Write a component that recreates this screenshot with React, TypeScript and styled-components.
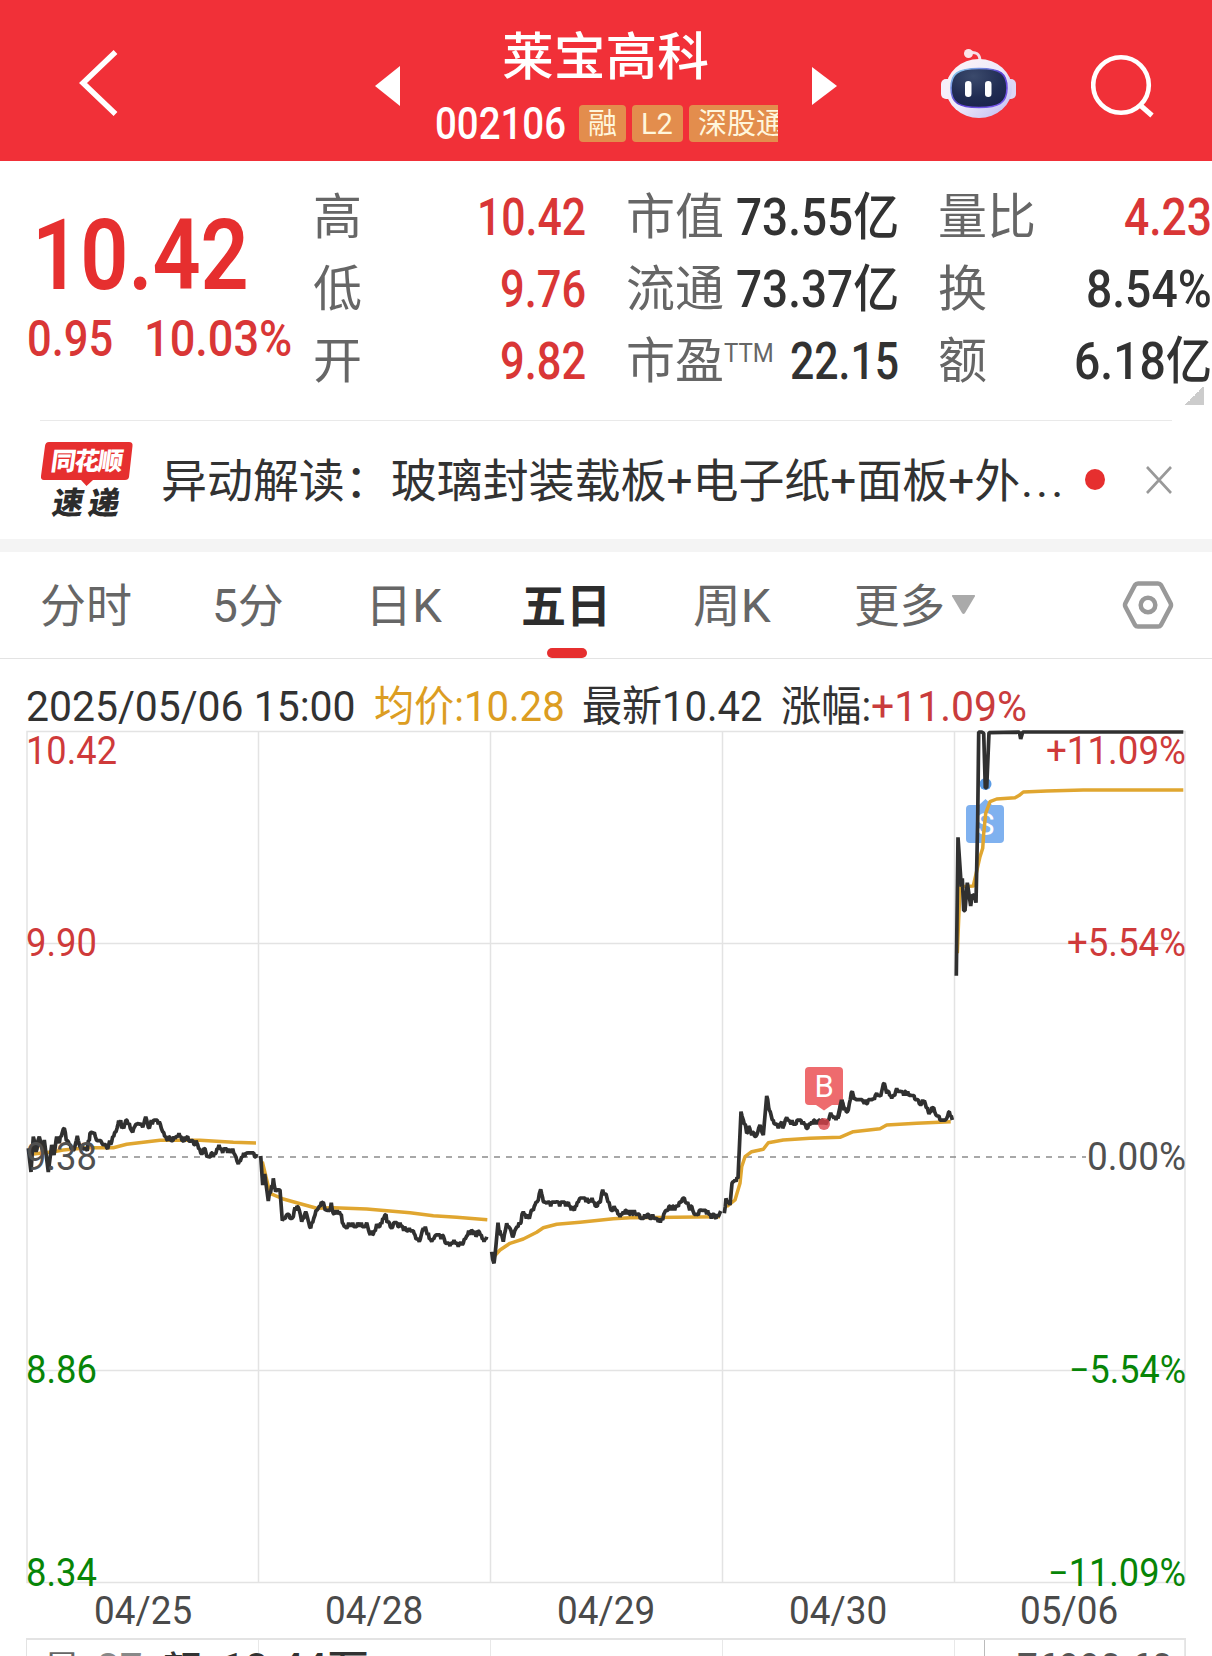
import React, { useLayoutEffect, useRef, useState } from "react";
import styled, { createGlobalStyle } from "styled-components";

const GlobalStyle = createGlobalStyle`
  * { box-sizing: border-box; }
  body { margin: 0; background: #fff; }
`;

const RED = "#e62f2f";
const VALUE_RED = "#d93636";
const INK = "#323232";
const GREY = "#666";
const font = `Roboto, "Noto Sans CJK SC", sans-serif`;

const Screen = styled.main`
  width: 1212px;
  height: 1656px;
  overflow: hidden;
  display: flex;
  flex-direction: column;
  background: #fff;
  color: ${INK};
  font-family: ${font};
`;

/* Text condensed or widened to a given measure */
const FitBox = styled.span<{ $w: number }>`
  display: block;
  flex: none;
  width: ${(p) => p.$w}px;
  white-space: pre;
`;
const FitInner = styled.span`
  display: inline-block;
  transform-origin: 0 50%;
`;
function Fit({ w, children }: { w: number; children: React.ReactNode }) {
  const ref = useRef<HTMLSpanElement>(null);
  const [scale, setScale] = useState(1);
  useLayoutEffect(() => {
    if (ref.current) setScale(w / ref.current.offsetWidth);
  }, [w]);
  return (
    <FitBox $w={w}>
      <FitInner ref={ref} style={{ transform: `scaleX(${scale})` }}>
        {children}
      </FitInner>
    </FitBox>
  );
}

/* ---------- header ---------- */
const Header = styled.header`
  flex: none;
  height: 161px;
  background: #f13038;
  color: #fff;
  display: grid;
  grid-template-columns: 375px 60px 343px 163px 150px 1fr;
`;
const HeaderCell = styled.div<{ $top: number; $left?: number }>`
  padding: ${(p) => p.$top}px 0 0 ${(p) => p.$left ?? 0}px;
  svg { display: block; }
`;
const TitleColumn = styled.div`
  padding-top: 23px;
  display: flex;
  flex-direction: column;
  overflow: hidden;
`;
const StockName = styled.h1`
  margin: 0 0 12px 67px;
  height: 70px;
  line-height: 70px;
  font-size: 51px;
  font-weight: 500;
`;
const CodeRow = styled.div`
  display: flex;
  height: 37px;
  gap: 6px;
`;
const Code = styled.div`
  flex: none;
  width: 138px;
  font-size: 44px;
  line-height: 39px;
  font-weight: 500;
`;
const Tag = styled.span<{ $w: number }>`
  flex: none;
  width: ${(p) => p.$w}px;
  padding-left: 9px;
  border-radius: 4px;
  background: #e38d4d;
  color: #fff6dc;
  font-size: 29px;
  line-height: 39px;
  white-space: nowrap;
`;

/* ---------- quote ---------- */
const Quote = styled.section`
  flex: none;
  height: 259px;
  padding-top: 19px;
  display: grid;
  grid-template-columns: 316px 270px 270px 271px;
  position: relative;
`;
const PriceColumn = styled.div`
  padding: 39px 0 0 27px;
  color: ${RED};
`;
const Price = styled.div`
  padding-left: 5px;
  height: 70px;
  line-height: 74px;
  font-size: 98px;
  font-weight: 600;
`;
const Change = styled.div`
  margin-top: 24px;
  height: 50px;
  line-height: 52px;
  display: flex;
  gap: 31px;
  color: ${VALUE_RED};
  font-size: 50px;
  font-weight: 500;
`;
const Stats = styled.dl<{ $shift: number }>`
  margin: 0 -${(p) => p.$shift}px 0 ${(p) => p.$shift}px;
`;
const Stat = styled.div`
  height: 72px;
  line-height: 76px;
  display: flex;
  justify-content: space-between;
`;
const StatLabel = styled.dt`
  display: flex;
  color: ${GREY};
  font-size: 49px;
  margin-left: -3px;
`;
const Superscript = styled.sup`
  font-size: 25px;
  line-height: 60px;
  vertical-align: top;
`;
const StatValue = styled.dd<{ $red?: boolean }>`
  margin: 0;
  color: ${(p) => (p.$red ? VALUE_RED : INK)};
  font-size: 51px;
  line-height: 76px;
  font-weight: 500;
`;
const ExpandCorner = styled.i`
  position: absolute;
  right: 8px;
  bottom: 15px;
  width: 19px;
  height: 19px;
  background: linear-gradient(135deg, transparent 50%, #ccc 50%);
`;

/* ---------- news ---------- */
const News = styled.section`
  flex: none;
  height: 119px;
  margin: 0 40px;
  border-top: 1px solid #e9e9e9;
  display: flex;
`;
const NewsLogo = styled.div`
  width: 121px;
  padding-top: 21px;
  svg { display: block; }
`;
const NewsText = styled.p`
  margin: 0;
  width: 925px;
  display: flex;
  font-size: 46px;
  line-height: 121px;
`;
const Ellipsis = styled.span`
  margin-left: 1px;
  letter-spacing: 3px;
`;
const Dot = styled.i`
  width: 20px;
  height: 21px;
  margin-top: 48px;
  border-radius: 50%;
  background: ${RED};
`;
const Close = styled.div`
  margin: 45px 0 0 39px;
`;
const Band = styled.div`
  flex: none;
  height: 13px;
  background: #f4f4f4;
`;

/* ---------- tabs ---------- */
const Tabs = styled.nav`
  flex: none;
  height: 107px;
  padding-left: 40px;
  border-bottom: 1px solid #e3e3e3;
  display: grid;
  grid-template-columns: 172px 153px 156px 172px 161px 268px 1fr;
`;
const Tab = styled.div<{ $active?: boolean }>`
  display: flex;
  flex-direction: column;
  height: 106px;
  color: ${(p) => (p.$active ? "#2d2d2d" : GREY)};
  font-weight: ${(p) => (p.$active ? 700 : 400)};
  font-size: 46px;
  line-height: 109px;
`;
const Underline = styled.i`
  width: 40px;
  height: 11px;
  margin: -13px 0 0 26px;
  border-radius: 6px;
  background: ${RED};
`;
const MoreTab = styled.div`
  display: flex;
  color: ${GREY};
  font-size: 46px;
  line-height: 109px;
  svg { margin: 43px 0 0 7px; }
`;
const Settings = styled.div`
  padding-top: 29px;
`;

/* ---------- chart ---------- */
const Legend = styled.div`
  flex: none;
  height: 72px;
  padding: 13px 0 0 26px;
  display: flex;
  font-size: 42px;
  line-height: 70px;
`;
const LegendItem = styled.div<{ $color?: string; $gap?: number }>`
  color: ${(p) => p.$color ?? INK};
  margin-right: ${(p) => p.$gap ?? 0}px;
`;
const Plot = styled.svg`
  flex: none;
  display: block;
  overflow: visible;
`;
const AxisText = styled.text`
  font-family: ${font};
  font-size: 38px;
`;
const MarkText = styled.text`
  font-family: ${font};
  font-size: 31px;
  fill: #fff;
`;
const Dates = styled.div`
  flex: none;
  height: 55px;
  margin: 0 27px;
  display: grid;
  grid-template-columns: repeat(5, 1fr);
  justify-items: center;
  color: #4a4a4a;
  font-size: 38px;
  line-height: 56px;
`;
const Volume = styled.section`
  position: relative;
  flex: none;
  height: 60px;
  margin: 0 26px;
  border: 1px solid #e3e3e3;
  border-top-width: 2px;
  display: grid;
  grid-template-columns: repeat(4, 232px) 1fr;
`;
const VolumeCell = styled.div`
  border-right: 1px solid #e8e8e8;
  &:last-child { border: 0; }
`;
const VolumeText = styled.div`
  position: absolute;
  inset: 5px 12px auto 16px;
  display: flex;
  font-size: 38px;
  line-height: 50px;
`;
const VolumeItem = styled.span<{ $color?: string; $gap?: number; $lift?: number; $weight?: number; $end?: boolean }>`
  color: ${(p) => p.$color ?? INK};
  font-weight: ${(p) => p.$weight ?? 400};
  margin: -${(p) => p.$lift ?? 0}px ${(p) => p.$gap ?? 0}px 0 ${(p) => (p.$end ? "auto" : "0")};
`;
const VolumeMark = styled.i`
  position: absolute;
  left: 957px;
  top: 0;
  width: 1px;
  height: 60px;
  background: #bbb;
`;

type Pt = [number, number];
interface Session { ox: number; oy: number; price: Pt[]; avg: Pt[]; }

const sessions: Session[] = [
  {
    ox: 0, oy: 1080,
    price: [[85,205],[93,276],[100,170],[108,215],[118,170],[128,215],[133,180],[145,276],[155,195],[162,225],[170,170],[178,190],[190,147],[205,185],[220,212],[232,168],[240,200],[262,212],[270,160],[280,160],[290,182],[305,188],[320,203],[335,185],[348,155],[356,122],[368,140],[378,120],[388,130],[395,152],[405,138],[415,130],[428,142],[437,110],[445,142],[460,122],[478,125],[488,155],[500,178],[510,172],[525,176],[537,160],[552,185],[560,172],[570,185],[590,188],[605,222],[612,205],[625,228],[645,222],[657,195],[665,208],[692,208],[705,225],[715,252],[725,230],[740,220],[770,222]],
    avg: [[100,222],[160,215],[190,210],[260,203],[340,203],[380,193],[430,187],[480,181],[600,181],[700,187],[768,189]],
  },
  {
    ox: 250, oy: 1120,
    price: [[32,108],[38,195],[44,162],[55,243],[62,215],[70,175],[77,215],[90,210],[97,302],[108,288],[130,290],[135,262],[145,262],[155,305],[167,275],[182,325],[195,285],[205,265],[217,248],[228,270],[240,272],[244,248],[250,280],[268,275],[280,312],[290,325],[302,312],[325,318],[350,308],[358,338],[370,342],[380,312],[395,312],[405,285],[415,305],[425,325],[438,308],[455,318],[468,330],[478,325],[492,340],[508,365],[520,325],[535,338],[545,365],[555,348],[580,348],[590,370],[600,378],[612,360],[625,380],[637,375],[650,348],[668,332],[678,350],[688,335],[702,365],[710,350]],
    avg: [[37,125],[60,220],[100,237],[140,248],[200,265],[250,263],[350,267],[480,278],[550,287],[620,292],[712,299]],
  },
  {
    ox: 480, oy: 1150,
    price: [[35,305],[42,340],[48,285],[54,218],[62,255],[70,275],[80,220],[90,235],[98,262],[108,235],[120,222],[130,185],[145,200],[157,180],[165,165],[175,150],[182,118],[190,155],[200,160],[230,155],[262,162],[280,177],[297,150],[330,148],[340,157],[358,157],[365,130],[378,132],[390,170],[405,175],[420,200],[430,185],[475,192],[485,205],[500,195],[525,205],[535,215],[548,210],[555,185],[575,172],[595,170],[607,147],[620,160],[640,185],[655,195],[662,180],[685,190],[705,202],[715,200],[722,183]],
    avg: [[42,320],[60,300],[90,280],[130,267],[170,247],[190,233],[230,223],[300,217],[400,206],[450,203],[720,200]],
  },
  {
    ox: 710, oy: 1050,
    price: [[43,490],[48,445],[60,465],[66,400],[75,390],[84,385],[93,185],[100,210],[110,250],[116,228],[125,255],[140,255],[150,225],[160,255],[170,138],[178,180],[192,220],[205,235],[215,215],[220,230],[230,202],[240,215],[280,215],[293,235],[305,215],[350,218],[362,188],[372,205],[383,205],[395,150],[403,180],[415,180],[424,128],[435,145],[460,155],[490,145],[500,130],[512,138],[520,102],[530,130],[545,145],[560,115],[575,125],[600,135],[625,150],[632,165],[643,152],[657,192],[665,172],[678,195],[700,210],[710,205],[718,185],[727,210]],
    avg: [[50,470],[75,450],[90,400],[95,350],[105,320],[125,305],[160,298],[175,278],[220,270],[300,265],[390,262],[430,245],[510,236],[530,225],[620,220],[722,215]],
  },
  {
    ox: 930, oy: 720,
    price: [[79,767],[84,352],[94,500],[97,475],[101,572],[105,572],[112,488],[122,558],[130,525],[138,548],[143,300],[146,36],[155,36],[161,40],[166,203],[170,203],[177,38],[268,36],[272,57],[278,36],[760,36]],
    avg: [[82,700],[90,500],[130,498],[150,410],[158,385],[161,340],[167,280],[180,245],[200,237],[255,233],[268,226],[280,216],[350,213],[460,210],[760,210]],
  },
];

const path = (s: Session, pts: Pt[]) =>
  pts.map(([x, y], i) => `${i ? "L" : "M"}${(s.ox + x / 3).toFixed(1)} ${(s.oy + y / 3).toFixed(1)}`).join("");

/* Height of one 0.01 price tick, in plot pixels */
const TICK = 4.1;

/* Minute-by-minute line: one sample per pixel, snapped to the price tick */
const minutePath = (s: Session) => {
  const out: string[] = [];
  s.price.forEach((p, i) => {
    const n = s.price[i + 1];
    const x0 = s.ox + p[0] / 3;
    const y0 = s.oy + p[1] / 3;
    out.push(`${x0.toFixed(1)} ${y0.toFixed(1)}`);
    if (!n || n[1] < 60 || Math.abs(n[1] - p[1]) > 60) return;
    const dx = (n[0] - p[0]) / 3;
    const dy = (n[1] - p[1]) / 3;
    for (let k = 1; k < dx - 0.5; k++) {
      const wave = Math.sin((x0 + k) * 12.9898) * 43758.5453;
      const noise = (wave - Math.floor(wave) - 0.5) * TICK * 1.05;
      const y = y0 + (dy * k) / dx + noise;
      out.push(`${(x0 + k).toFixed(1)} ${(1157 + Math.round((y - 1157) / TICK) * TICK).toFixed(1)}`);
    }
  });
  return "M" + out.join("L");
};

const axis = [
  { y: 763.5, left: "10.42", lw: 89, right: "+11.09%", rw: 139, color: "#cf3a3a" },
  { y: 956, left: "9.90", lw: 69, right: "+5.54%", rw: 118, color: "#cf3a3a" },
  { y: 1169.5, left: "9.38", lw: 69, right: "0.00%", rw: 98, color: "#505050" },
  { y: 1383, left: "8.86", lw: 69, right: "−5.54%", rw: 116, color: "#078507" },
  { y: 1585.5, left: "8.34", lw: 69, right: "−11.09%", rw: 137, color: "#078507" },
];

function Chart() {
  return (
    <Plot width="1212" height="852" viewBox="0 731 1212 852">
      <g stroke="#e3e3e3" strokeWidth="1.5" fill="none">
        <path d="M27 731.5H1185V1582.5H27ZM27 943.5H1185M27 1370.5H1185" />
        <path d="M258.5 731V1582M490.5 731V1582M722.5 731V1582M954.5 731V1582" />
      </g>
      <path d="M98 1157H1086" stroke="#8c8c8c" strokeWidth="1.7" strokeDasharray="6 6" />
      <g fill="#7fb1ef">
        <rect x="966" y="805" width="38" height="38" rx="4" />
        <path d="M979 805L985.500 799L992 805Z" />
        <circle cx="985.500" cy="784" r="6" fill="#5a9be5" />
      </g>
      <MarkText x="976" y="835" textLength="19">S</MarkText>
      {sessions.map((s) => (
        <g key={s.ox} fill="none">
          <path d={path(s, s.avg)} stroke="#e0a630" strokeWidth="3.5" strokeLinejoin="round" />
          <path d={minutePath(s)} stroke="#303030" strokeWidth="3.7" strokeLinejoin="bevel" />
        </g>
      ))}
      <g fill="#ee6b6e">
        <rect x="805" y="1067" width="38" height="38" rx="4" />
        <path d="M816 1105H832L824 1110.500Z" />
        <circle cx="824" cy="1124" r="6" fill="#d9434b" fillOpacity=".8" />
      </g>
      <path d={path(sessions[3], [[383,205],[395,150],[403,180]])} stroke="#303030" strokeWidth="4.1" fill="none" />
      <MarkText x="814.500" y="1096.500" textLength="20">B</MarkText>
      {axis.map((a) => (
        <g key={a.left} fill={a.color}>
          <AxisText x="26" y={a.y} textLength={a.lw + 2} lengthAdjust="spacingAndGlyphs">{a.left}</AxisText>
          <AxisText x={1185 - a.rw} y={a.y} textLength={a.rw + 1} lengthAdjust="spacingAndGlyphs">{a.right}</AxisText>
        </g>
      ))}
    </Plot>
  );
}

const Robot = () => (
  <svg width="76" height="71" viewBox="941 48 76 71">
    <defs>
      <linearGradient id="shell" x1="0" y1="0" x2="1" y2="1">
        <stop offset="0" stopColor="#fff4f5" />
        <stop offset=".5" stopColor="#eeeafb" />
        <stop offset="1" stopColor="#bcb8f0" />
      </linearGradient>
      <linearGradient id="rim" x1="0" y1="0" x2="1" y2="1">
        <stop offset="0" stopColor="#8edff0" />
        <stop offset=".5" stopColor="#5b3fd0" />
        <stop offset="1" stopColor="#7b5cf0" />
      </linearGradient>
      <radialGradient id="visor" cx=".4" cy=".2" r=".9">
        <stop offset="0" stopColor="#3b4a6c" />
        <stop offset=".6" stopColor="#202c52" />
        <stop offset="1" stopColor="#19224a" />
      </radialGradient>
    </defs>
    <path d="M968 53C976 51 980 54 980 61" fill="none" stroke="#f5dfe8" strokeWidth="3" />
    <circle cx="968.500" cy="53.500" r="4.500" fill="#fbe4ea" />
    <rect x="941" y="79" width="12" height="20" rx="5" fill="#f6eefa" />
    <rect x="1004" y="79" width="12" height="20" rx="5" fill="#ddd6f6" />
    <ellipse cx="979" cy="88.500" rx="33" ry="29.500" fill="url(#shell)" />
    <path d="M979 68.500C1001 68.500 1007 74 1007 88C1007 103 999 107.500 979 107.500C959 107.500 951 103 951 88C951 74 957 68.500 979 68.500Z" fill="url(#visor)" stroke="url(#rim)" strokeWidth="1.600" />
    <rect x="965" y="81" width="6.500" height="16" rx="3.200" fill="#fff" />
    <rect x="985" y="81" width="6.500" height="16" rx="3.200" fill="#fff" />
  </svg>
);

const LogoSvg = styled.svg`
  overflow: visible;
`;
const LogoText = styled.text`
  font-family: "Noto Sans CJK SC", sans-serif;
  font-weight: 900;
`;

const Logo = () => (
  <LogoSvg width="94" height="76" viewBox="40 442 94 76">
    <path d="M49 442H129Q133 442 132.500 446L129 477Q128.500 480 125 480H93L86.500 486L81 480H44Q40.500 480 41 476L45 446Q45.500 442 49 442Z" fill={RED} />
    <LogoText x="50" y="470" fontSize="25" fill="#fff" textLength="72" transform="translate(86 470) skewX(-8) translate(-86 -470)">同花顺</LogoText>
    <LogoText x="51" y="514" fontSize="31" fill="#2c2c2c" textLength="67" transform="translate(86 514) skewX(-10) translate(-86 -514)">速递</LogoText>
  </LogoSvg>
);

export default function App() {
  return (
    <Screen>
      <GlobalStyle />
      <Header>
        <HeaderCell $top={48} $left={78}>
          <svg width="42" height="70" viewBox="0 0 42 70" fill="none" stroke="#fff" strokeWidth="5.500">
            <path d="M37.500 4L5 35L37.500 66" />
          </svg>
        </HeaderCell>
        <HeaderCell $top={66}>
          <svg width="25" height="40" viewBox="0 0 25 40" fill="#fff"><path d="M25 0V40L0 20Z" /></svg>
        </HeaderCell>
        <TitleColumn>
          <StockName><Fit w={207}>莱宝高科</Fit></StockName>
          <CodeRow>
            <Code><Fit w={131}>002106</Fit></Code>
            <Tag $w={47}>融</Tag>
            <Tag $w={51}><Fit w={32}>L2</Fit></Tag>
            <Tag $w={110}>深股通</Tag>
          </CodeRow>
        </TitleColumn>
        <HeaderCell $top={67} $left={34}>
          <svg width="25" height="38" viewBox="0 0 25 38" fill="#fff"><path d="M0 0V38L25 19Z" /></svg>
        </HeaderCell>
        <HeaderCell $top={48}><Robot /></HeaderCell>
        <HeaderCell $top={54}>
          <svg width="64" height="66" viewBox="0 0 64 66" fill="none" stroke="#fff" strokeWidth="4.600">
            <circle cx="30" cy="31" r="27.800" />
            <path d="M49 51L61 61.500" strokeWidth="5" />
          </svg>
        </HeaderCell>
      </Header>

      <Quote>
        <PriceColumn>
          <Price><Fit w={217}>10.42</Fit></Price>
          <Change><Fit w={86}>0.95</Fit><Fit w={148}>10.03%</Fit></Change>
        </PriceColumn>
        <Stats $shift={0}>
          <Stat><StatLabel>高</StatLabel><StatValue $red><Fit w={109}>10.42</Fit></StatValue></Stat>
          <Stat><StatLabel>低</StatLabel><StatValue $red><Fit w={86}>9.76</Fit></StatValue></Stat>
          <Stat><StatLabel>开</StatLabel><StatValue $red><Fit w={86}>9.82</Fit></StatValue></Stat>
        </Stats>
        <Stats $shift={43}>
          <Stat><StatLabel>市值</StatLabel><StatValue><Fit w={163}>73.55亿</Fit></StatValue></Stat>
          <Stat><StatLabel>流通</StatLabel><StatValue><Fit w={163}>73.37亿</Fit></StatValue></Stat>
          <Stat>
            <StatLabel>市盈<Superscript><Fit w={50}>TTM</Fit></Superscript></StatLabel>
            <StatValue><Fit w={109}>22.15</Fit></StatValue>
          </Stat>
        </Stats>
        <Stats $shift={85}>
          <Stat><StatLabel>量比</StatLabel><StatValue $red><Fit w={88}>4.23</Fit></StatValue></Stat>
          <Stat><StatLabel>换</StatLabel><StatValue><Fit w={126}>8.54%</Fit></StatValue></Stat>
          <Stat><StatLabel>额</StatLabel><StatValue><Fit w={138}>6.18亿</Fit></StatValue></Stat>
        </Stats>
        <ExpandCorner />
      </Quote>

      <News>
        <NewsLogo><Logo /></NewsLogo>
        <NewsText>
          <Fit w={859}>异动解读：玻璃封装载板+电子纸+面板+外</Fit>
          <Ellipsis>...</Ellipsis>
        </NewsText>
        <Dot />
        <Close>
          <svg width="28" height="28" viewBox="0 0 28 28" stroke="#999" strokeWidth="2.600">
            <path d="M3 1L27 27M27 1L3 27" />
          </svg>
        </Close>
      </News>
      <Band />

      <Tabs>
        <Tab><Fit w={92}>分时</Fit></Tab>
        <Tab><Fit w={72}>5分</Fit></Tab>
        <Tab><Fit w={77}>日K</Fit></Tab>
        <Tab $active><Fit w={90}>五日</Fit><Underline /></Tab>
        <Tab><Fit w={78}>周K</Fit></Tab>
        <MoreTab>
          <Fit w={91}>更多</Fit>
          <svg width="23" height="20" viewBox="0 0 23 20" fill="#aaa"><path d="M1 0H22Q24 0 22.500 2L13 18Q11.500 20 10 18L.5 2Q-1 0 1 0Z" /></svg>
        </MoreTab>
        <Settings>
          <svg width="52" height="48" viewBox="0 0 52 48" fill="none" stroke="#999" strokeWidth="4.500" strokeLinejoin="round">
            <path d="M16 2.500H36Q38 2.500 39 4L48.500 22Q49.500 24 48.500 26L39 44Q38 45.500 36 45.500H16Q14 45.500 13 44L3.500 26Q2.500 24 3.500 22L13 4Q14 2.500 16 2.500Z" />
            <circle cx="26" cy="24" r="7.300" />
          </svg>
        </Settings>
      </Tabs>

      <Legend>
        <LegendItem $gap={18}><Fit w={330}>2025/05/06 15:00</Fit></LegendItem>
        <LegendItem $color="#dc9d22" $gap={17}><Fit w={191}>均价:10.28</Fit></LegendItem>
        <LegendItem $gap={18}><Fit w={181}>最新10.42</Fit></LegendItem>
        <LegendItem><Fit w={90}>涨幅:</Fit></LegendItem>
        <LegendItem $color="#c93c3c"><Fit w={156}>+11.09%</Fit></LegendItem>
      </Legend>
      <Chart />
      <Dates>
        {["04/25", "04/28", "04/29", "04/30", "05/06"].map((d) => (
          <Fit key={d} w={98}>{d}</Fit>
        ))}
      </Dates>
      <Volume>
        <VolumeCell /><VolumeCell /><VolumeCell /><VolumeCell /><VolumeCell />
        <VolumeMark />
        <VolumeText>
          <VolumeItem $color="#666" $gap={16}>量</VolumeItem>
          <VolumeItem $color="#888" $gap={20} $lift={2}><Fit w={46}>37</Fit></VolumeItem>
          <VolumeItem $gap={20} $weight={500}>额</VolumeItem>
          <VolumeItem $lift={2} $weight={500}><Fit w={148}>10.44万</Fit></VolumeItem>
          <VolumeItem $end $color="#555" $lift={2}><Fit w={156}>76990.60</Fit></VolumeItem>
        </VolumeText>
      </Volume>
    </Screen>
  );
}
